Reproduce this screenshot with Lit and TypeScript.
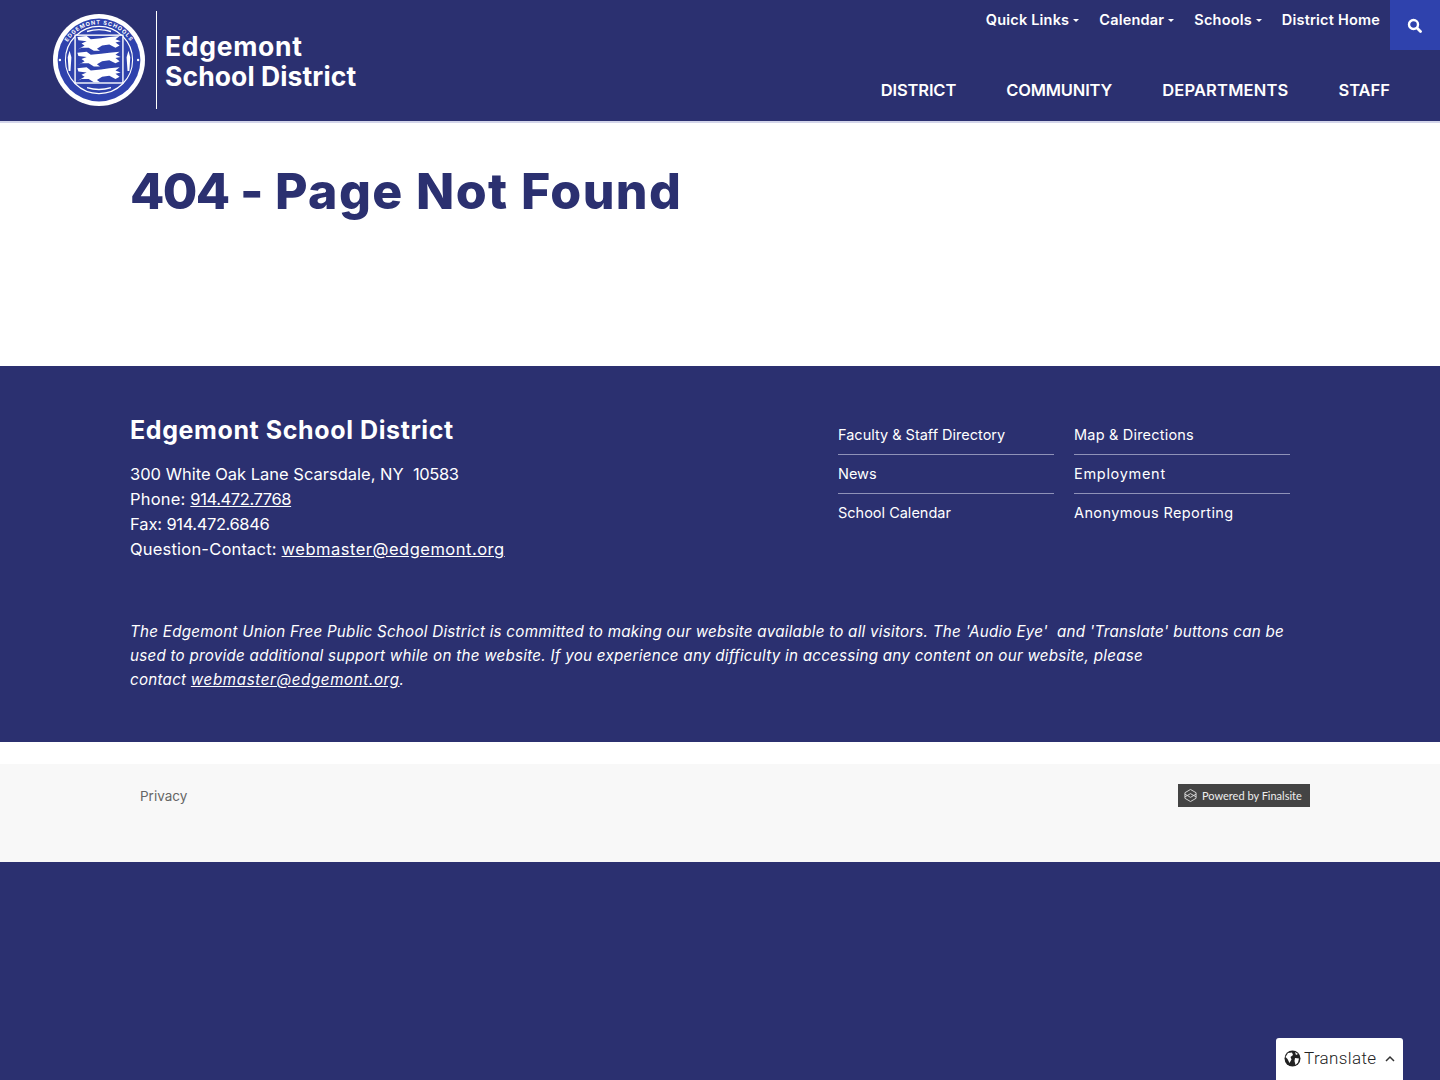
import { LitElement, html, css, svg } from "lit";
import { customElement } from "lit/decorators.js";

const lion = (y: number) => svg`<path transform="translate(50 ${y}) scale(1.12 1.15) translate(-50 0)" d="M29 -6 L38 -7 L42 -4 L52 -5 L60 -6 L70 -7 L66 -4 L71 -2 L66 -1 L70 2 L66 4 L60 1 L53 2 L48 5 L51 7 L45 7 L40 4 L33 4 L29 6 L36 2 L33 0 L38 -2 L30 -3 Z" fill="#fff"/>`;

@customElement("app-root")
export class AppRoot extends LitElement {
  static styles = css`
    :host { display: block; min-height: 1080px; background: #2b3070; font-family: Inter, "Liberation Sans", sans-serif; color: #fff; }
    a { color: inherit; text-decoration: none; }
    .header { height: 121px; display: flex; justify-content: space-between; background: #2b3070; border-bottom: 2px solid #d3d5ea; box-sizing: content-box; }
    .brand { display: flex; align-items: center; padding: 0 0 1px 53px; box-sizing: border-box; }
    .seal { width: 92px; height: 92px; display: block; }
    .divider { width: 1px; height: 98px; background: #fff; margin: 0 8px 0 11px; }
    .brand-name { font-size: 26.5px; line-height: 30px; font-weight: 700; margin-top: 1px; }
    .brand-name .first { letter-spacing: 0.7px; }
    .brand-name .second { letter-spacing: 0.1px; }
    .nav { display: flex; flex-direction: column; align-items: flex-end; }
    .top { display: flex; align-items: flex-start; height: 50px; }
    .util { display: flex; gap: 20px; padding: 11px 10px 0 0; font-size: 14.5px; line-height: 18px; font-weight: 600; letter-spacing: 0.2px; white-space: nowrap; }
    .util a { display: flex; align-items: center; }
    .caret { width: 0; height: 0; margin-left: 4px; border: 3px solid transparent; border-top-color: #fff; border-bottom-width: 0; }
    .search { width: 50px; height: 50px; background: #2f42ad; display: flex; align-items: center; justify-content: center; padding-right: 1px; box-sizing: border-box; }
    .main-nav { display: flex; gap: 50px; padding: 30px 50px 0 0; font-size: 16.5px; line-height: 20px; font-weight: 600; white-space: nowrap; }
    .main-nav .narrow { letter-spacing: -0.15px; }
    .main-nav .wide { letter-spacing: 0.18px; }
    .content { background: #fff; height: 243px; padding: 38px 130px 0; box-sizing: border-box; }
    h1 { margin: 0; font-size: 50px; line-height: 60px; font-weight: 800; color: #2b3070; letter-spacing: 1.4px; }
    h1 .code { letter-spacing: -1.6px; }
    h1 .sep { letter-spacing: 0.3px; }
    .footer { height: 376px; background: #2b3070; padding: 48px 150px 0 130px; box-sizing: border-box; }
    .foot-top { display: flex; justify-content: space-between; height: 206px; }
    .foot-title { margin: 0 0 16px; font-size: 25px; line-height: 32px; font-weight: 700; letter-spacing: 0.6px; }
    .addr { font-size: 16.5px; line-height: 25px; font-weight: 400; letter-spacing: 0.2px; }
    .addr .plain { letter-spacing: 0; }
    .addr .label { letter-spacing: -0.1px; }
    .addr .num { letter-spacing: -0.4px; }
    .addr .mail { letter-spacing: 0.5px; }
    .addr a, .note a { text-decoration: underline; }
    .links { display: grid; grid-template-columns: 216px 216px; column-gap: 20px; width: 452px; margin-top: 2px; align-self: flex-start; }
    .links a { height: 39px; box-sizing: border-box; padding-top: 9px; font-size: 14.5px; line-height: 20px; border-bottom: 1px solid #8f92b8; white-space: nowrap; }
    .links a.map { letter-spacing: 0.2px; }
    .links a.emp { letter-spacing: 0.7px; }
    .links a.anon { letter-spacing: 0.4px; }
    .links a.last { border-bottom: none; }
    .note { margin: 0; width: 1170px; font-size: 15.2px; line-height: 24px; font-style: italic; letter-spacing: 0.245px; }
    .note a { letter-spacing: 0.6px; }
    .gap { height: 22px; background: #fff; }
    .legal { height: 98px; background: #f8f8f8; padding: 20px 130px 0 140px; box-sizing: border-box; display: flex; justify-content: space-between; align-items: flex-start; }
    .privacy { color: #666; font-size: 13.5px; line-height: 24px; }
    .finalsite { width: 132px; height: 23px; background: #444; color: #eee; display: flex; align-items: center; gap: 5px; padding-left: 6px; box-sizing: border-box; font-family: Lato, sans-serif; font-size: 11px; white-space: nowrap; }
    .finalsite svg { flex: none; }
    .translate { position: fixed; right: 37px; bottom: 0; width: 127px; height: 42px; box-sizing: border-box; background: #fff; border-radius: 3px 3px 0 0; color: #222; display: flex; align-items: flex-start; padding: 9px 0 0 8px; font-family: Roboto, sans-serif; font-size: 17px; font-weight: 300; line-height: 22px; letter-spacing: 0.35px; }
    .translate .globe { margin: 3px 3px 0 0; flex: none; }
    .translate .chev { margin: 8px 0 0 9px; flex: none; }
  `;

  render() {
    return html`
      <header class="header">
        <div class="brand">
          <svg class="seal" viewBox="0 0 100 100" role="img" aria-label="Edgemont Schools seal">
            <circle cx="50" cy="50" r="50" fill="#fff"/>
            <circle cx="50" cy="50" r="45" fill="#2f42ad"/>
            <circle cx="50" cy="50" r="36.5" fill="none" stroke="#fff" stroke-width="1.2"/>
            <defs><path id="arc" d="M11.5 62 A40 40 0 1 1 88.5 62"/></defs>
            <text font-size="6" font-weight="700" fill="#fff" letter-spacing="1" font-family="Inter, sans-serif"><textPath href="#arc" startOffset="50%" text-anchor="middle">EDGEMONT SCHOOLS</textPath></text>
            <circle cx="7.5" cy="50" r="1.3" fill="#fff"/>
            <circle cx="92.5" cy="50" r="1.3" fill="#fff"/>
            <rect x="24" y="23" width="52" height="52" fill="#2f42ad" stroke="#fff" stroke-width="1.5"/>
            ${lion(32)}${lion(49)}${lion(66)}
            <path d="M18 40 L20 47 L19 62 L17 62 L16 47 Z M82 40 L84 47 L83 62 L81 62 L80 47 Z" fill="#fff"/>
            <path d="M37 19 Q50 15 63 19 M37 80 Q50 84 63 80" fill="none" stroke="#fff" stroke-width="1.5"/>
          </svg>
          <div class="divider"></div>
          <a class="brand-name" href="#"><span class="first">Edgemont</span><br /><span class="second">School District</span></a>
        </div>
        <nav class="nav">
          <div class="top">
            <div class="util">
              <a href="#">Quick Links<span class="caret"></span></a>
              <a href="#">Calendar<span class="caret"></span></a>
              <a href="#">Schools<span class="caret"></span></a>
              <a href="#">District Home</a>
            </div>
            <a class="search" href="#" aria-label="Search">
              <svg width="15" height="15" viewBox="0 0 15 15"><circle cx="6.5" cy="6.5" r="4.5" fill="none" stroke="#fff" stroke-width="2.4"/><path d="M10 10 L13.5 13.5" stroke="#fff" stroke-width="2.8" stroke-linecap="round"/></svg>
            </a>
          </div>
          <div class="main-nav">
            <a class="narrow" href="#">DISTRICT</a><a class="narrow" href="#">COMMUNITY</a><a class="wide" href="#">DEPARTMENTS</a><a href="#">STAFF</a>
          </div>
        </nav>
      </header>
      <main class="content"><h1><span class="code">404</span><span class="sep"> - </span>Page Not Found</h1></main>
      <footer class="footer">
        <div class="foot-top">
          <div>
            <h2 class="foot-title">Edgemont School District</h2>
            <div class="addr">
              <span class="plain">300 White Oak Lane Scarsdale, NY&nbsp; </span><span class="num">10583</span><br />
              Phone: <a class="num" href="#">914.472.7768</a><br />
              <span class="label">Fax: </span><span class="num">914.472.6846</span><br />
              Question-Contact: <a class="mail" href="#">webmaster@edgemont.org</a>
            </div>
          </div>
          <div class="links">
            <a href="#">Faculty &amp; Staff Directory</a><a class="map" href="#">Map &amp; Directions</a>
            <a href="#">News</a><a class="emp" href="#">Employment</a>
            <a class="last" href="#">School Calendar</a><a class="last anon" href="#">Anonymous Reporting</a>
          </div>
        </div>
        <p class="note">The Edgemont Union Free Public School District is committed to making our website available to all visitors. The 'Audio Eye'&nbsp; and 'Translate' buttons can be used to provide additional support while on the website. If you experience any difficulty in accessing any content on our website, please<br />contact <a href="#">webmaster@edgemont.org</a>.</p>
      </footer>
      <div class="gap"></div>
      <div class="legal">
        <a class="privacy" href="#">Privacy</a>
        <a class="finalsite" href="#">
          <svg width="13" height="15" viewBox="0 0 14 15" fill="none" stroke="#ddd" stroke-width="1"><path d="M7 1 L13 4.5 V10.5 L7 14 L1 10.5 V4.5 Z"/><path d="M1 6 L7 9.5 L13 6 M1 9 L7 5.5 L13 9"/></svg>
          Powered by Finalsite
        </a>
      </div>
      <div class="translate">
        <svg class="globe" width="17" height="17" viewBox="0 0 17 17"><circle cx="8.5" cy="8.5" r="8" fill="#222"/><path d="M4 3 L8 2.5 L9 5 L6.5 7 L7.5 9.5 L5.5 13 L3.5 9 L1.5 7 Z M11 8 L15 8.5 L14 12.5 L11.5 15 L10.5 11 Z M11 2 L14 4 L12 5 Z" fill="#fff"/></svg>
        <span>Translate</span>
        <svg class="chev" width="10" height="8" viewBox="0 0 10 8"><path d="M1 6 L5 2 L9 6" fill="none" stroke="#333" stroke-width="1.5"/></svg>
      </div>
    `;
  }
}
